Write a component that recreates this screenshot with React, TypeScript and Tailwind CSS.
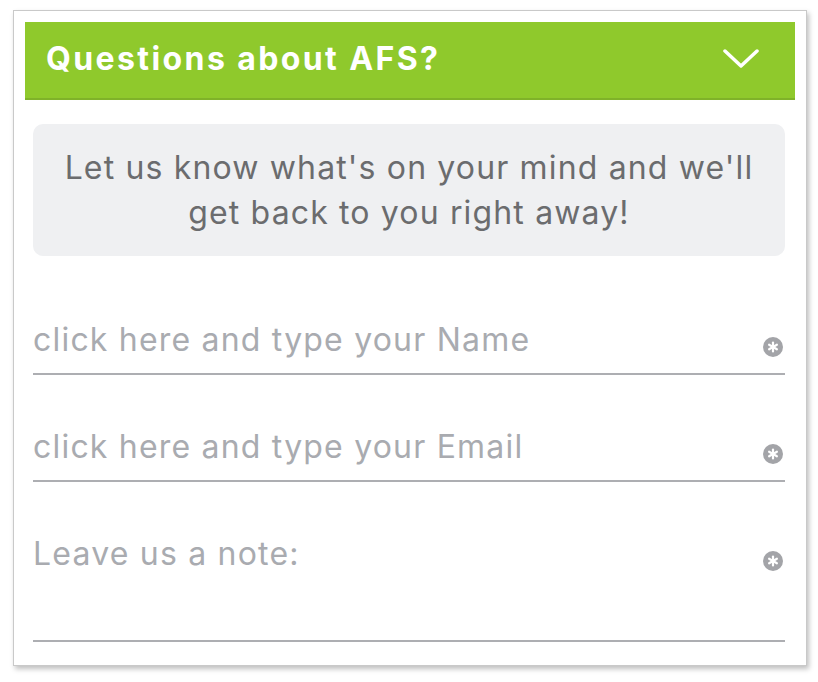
import React from 'react';

const RequiredIcon = () => (
  <svg width="20" height="20" viewBox="0 0 20 20" className="shrink-0">
    <circle cx="10" cy="10" r="10" fill="#a3a4a8" />
    <g stroke="#ffffff" strokeWidth="2.2" strokeLinecap="round">
      <line x1="10" y1="5.5" x2="10" y2="14.5" />
      <line x1="6.1" y1="7.75" x2="13.9" y2="12.25" />
      <line x1="6.1" y1="12.25" x2="13.9" y2="7.75" />
    </g>
  </svg>
);

const Field = ({ label, tall }: { label: string; tall?: boolean }) => (
  <div
    className={`flex items-start justify-between border-b-2 border-[#adaeb2] pt-[53px] ${
      tall ? 'h-[160px]' : 'h-[107px]'
    }`}
  >
    <span className="text-[32px] leading-[38px] tracking-[1.2px] text-[#a9abb0]">{label}</span>
    <div className="mt-[16px] mr-[2px]">
      <RequiredIcon />
    </div>
  </div>
);

export default function App() {
  return (
    <div className="min-h-[682px] bg-white pt-[10px] pl-[13px]" style={{ fontFamily: 'Inter, "Liberation Sans", Arial, sans-serif' }}>
      <div className="w-[794px] h-[656px] border border-[#c9c9c9] bg-white shadow-[2px_3px_5px_rgba(0,0,0,0.25)] px-[11px] pt-[11px]">
        <div className="flex items-center justify-between h-[78px] bg-[#8fc92c] border-b-2 border-[#7fb229] pl-[21px] pr-[36px] pb-[3px]">
          <h2 className="text-[32px] font-bold text-white tracking-[2.4px]">Questions about AFS?</h2>
          <svg width="36" height="20" viewBox="0 0 36 20" fill="none">
            <path d="M2 2 L18 17 L34 2" stroke="#ffffff" strokeWidth="3.5" strokeLinecap="round" strokeLinejoin="round" />
          </svg>
        </div>

        <div className="pl-[8px] pr-[10px] pt-[24px]">
          <div className="rounded-[10px] bg-[#eff0f2] h-[132px] flex items-center justify-center text-center text-[32px] leading-[45px] tracking-[1.15px] text-[#6b6c6e]">
            <p>
              Let us know what's on your mind and we'll
              <br />
              get back to you right away!
            </p>
          </div>

          <div className="mt-[12px]">
            <Field label="click here and type your Name" />
            <Field label="click here and type your Email" />
            <Field label="Leave us a note:" tall />
          </div>
        </div>
      </div>
    </div>
  );
}
